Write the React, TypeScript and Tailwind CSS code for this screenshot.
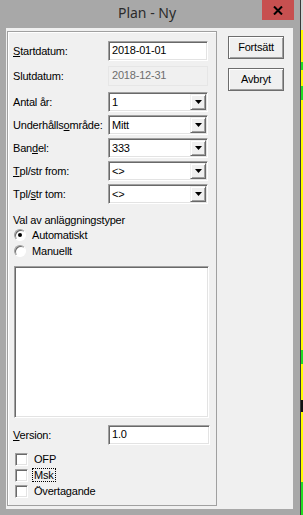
import React from "react";

const sunken =
  "border border-t-[#a0a0a0] border-l-[#a0a0a0] border-b-white border-r-white shadow-[inset_1px_1px_0_#696969,inset_-1px_-1px_0_#e3e3e3]";

function Row({ label, children, mt }: { label: React.ReactNode; children: React.ReactNode; mt: string }) {
  return (
    <div className={`flex h-[20px] items-center ${mt}`}>
      <span className="w-[95px] leading-[14px]">{label}</span>
      {children}
    </div>
  );
}

function TextBox({ value, w = "w-[100px]" }: { value: string; w?: string }) {
  return (
    <div className={`${sunken} ${w} h-[20px] bg-white pl-[3px] leading-[17px]`}>{value}</div>
  );
}

function Combo({ value }: { value: string }) {
  return (
    <div className={`${sunken} flex h-[20px] w-[100px] items-stretch bg-white p-[1px]`}>
      <span className="flex-1 pl-[2px] leading-[16px]">{value}</span>
      <span className="flex w-[16px] items-center justify-center border border-t-[#f0f0f0] border-l-[#f0f0f0] border-b-[#696969] border-r-[#696969] bg-[#f0f0f0] shadow-[inset_1px_1px_0_white,inset_-1px_-1px_0_#a0a0a0]">
        <svg width="7" height="4" viewBox="0 0 7 4">
          <path d="M0 0h7L3.5 4z" fill="#000" />
        </svg>
      </span>
    </div>
  );
}

function Radio({ checked, label }: { checked?: boolean; label: string }) {
  return (
    <div className="flex h-[16px] items-center pl-[1px]">
      <span className="flex h-[12px] w-[12px] items-center justify-center rounded-full border border-t-[#a0a0a0] border-l-[#a0a0a0] border-b-white border-r-white bg-white shadow-[inset_1px_1px_0_#696969]">
        {checked && <span className="h-[4px] w-[4px] rounded-full bg-black" />}
      </span>
      <span className="ml-[6px] leading-[14px]">{label}</span>
    </div>
  );
}

function Check({ label, focus }: { label: string; focus?: boolean }) {
  return (
    <div className="flex h-[16px] items-center pl-[2px]">
      <span className={`${sunken} h-[13px] w-[13px] bg-white`} />
      <span
        className={
          focus
            ? "ml-[4px] border border-dotted border-black px-[1px] leading-[12px]"
            : "ml-[6px] leading-[14px]"
        }
      >
        {label}
      </span>
    </div>
  );
}

function Button({ label }: { label: string }) {
  return (
    <div className="flex h-[23px] w-[56px] items-center justify-center border border-[#6d6d6d] bg-[#f0f0f0] shadow-[inset_1px_1px_0_white,inset_-1px_-1px_0_#a0a0a0]">
      {label}
    </div>
  );
}

export default function App() {
  return (
    <div className="flex h-[515px] w-[303px] bg-[#a8a8a8] font-['Liberation_Sans',Arial,sans-serif] text-[11px] tracking-[-0.2px] text-black">
      <div className="flex w-[300px] flex-col">
        <div className="flex h-[28px] items-start">
          <div className="flex-1" />
          <div className="pt-[3px] font-['Noto_Sans',sans-serif] text-[14px] leading-[20px] tracking-normal text-[#2b2b2b]">
            Plan - Ny
          </div>
          <div className="flex flex-1 justify-end pr-[6px]">
            <div className="flex h-[20px] w-[32px] items-center justify-center bg-[#c75050]">
              <svg width="10" height="9" viewBox="0 0 10 9">
                <path d="M1 0.5l8 8M9 0.5l-8 8" stroke="#000" strokeWidth="2" />
              </svg>
            </div>
          </div>
        </div>
        <div className="flex-1 pb-[6px] pl-[6px] pr-[7px]">
          <div className="flex h-full bg-[#f0f0f0] pl-[1px] pt-[3px]">
            <div className="flex h-[475px] w-[210px] flex-col border border-[#a0a0a0] pl-[5px] pt-[9px] shadow-[inset_1px_1px_0_white]">
              <Row mt="" label={<><u>S</u>tartdatum:</>}>
                <TextBox value="2018-01-01" />
              </Row>
              <Row mt="mt-[5px]" label="Slutdatum:">
                <div className="h-[20px] w-[100px] border border-[#e6e6e6] pl-[3px] leading-[17px] text-[#6d6d6d]">
                  2018-12-31
                </div>
              </Row>
              <Row mt="mt-[6px]" label="Antal år:">
                <Combo value="1" />
              </Row>
              <Row mt="mt-[3px]" label={<>Underhålls<u>o</u>mråde:</>}>
                <Combo value="Mitt" />
              </Row>
              <Row mt="mt-[3px]" label={<>Ban<u>d</u>el:</>}>
                <Combo value="333" />
              </Row>
              <Row mt="mt-[3px]" label={<><u>T</u>pl/str from:</>}>
                <Combo value="<>" />
              </Row>
              <Row mt="mt-[3px]" label={<>Tpl/<u>s</u>tr tom:</>}>
                <Combo value="<>" />
              </Row>
              <div className="mt-[9px] leading-[14px]">Val av anläggningstyper</div>
              <Radio checked label="Automatiskt" />
              <Radio label="Manuellt" />
              <div className={`${sunken} ml-[1px] mt-[7px] h-[152px] w-[195px] bg-white`} />
              <Row mt="mt-[7px]" label={<><u>V</u>ersion:</>}>
                <TextBox value="1.0" w="w-[102px]" />
              </Row>
              <div className="mt-[6px] flex flex-col">
                <Check label="OFP" />
                <Check label="Msk" focus />
                <Check label="Övertagande" />
              </div>
            </div>
            <div className="ml-[11px] mt-[5px] flex flex-col gap-[9px]">
              <Button label="Fortsätt" />
              <Button label="Avbryt" />
            </div>
          </div>
        </div>
      </div>
      <div className="flex w-[3px] flex-col border-l border-[#3a3a3a]">
        <div className="h-[30px] bg-[#d8d8d8]" />
        <div className="h-[32px] bg-[#ffff00]" />
        <div className="h-[8px] bg-[#22dd22]" />
        <div className="h-[16px] bg-[#ffff00]" />
        <div className="h-[14px] bg-[#22dd22]" />
        <div className="h-[250px] bg-[#ffff00]" />
        <div className="h-[14px] bg-[#22dd22]" />
        <div className="h-[36px] bg-[#ffff00]" />
        <div className="h-[12px] bg-[#111]" />
        <div className="h-[70px] bg-[#ffff00]" />
        <div className="flex-1 bg-[#22dd22]" />
      </div>
    </div>
  );
}
